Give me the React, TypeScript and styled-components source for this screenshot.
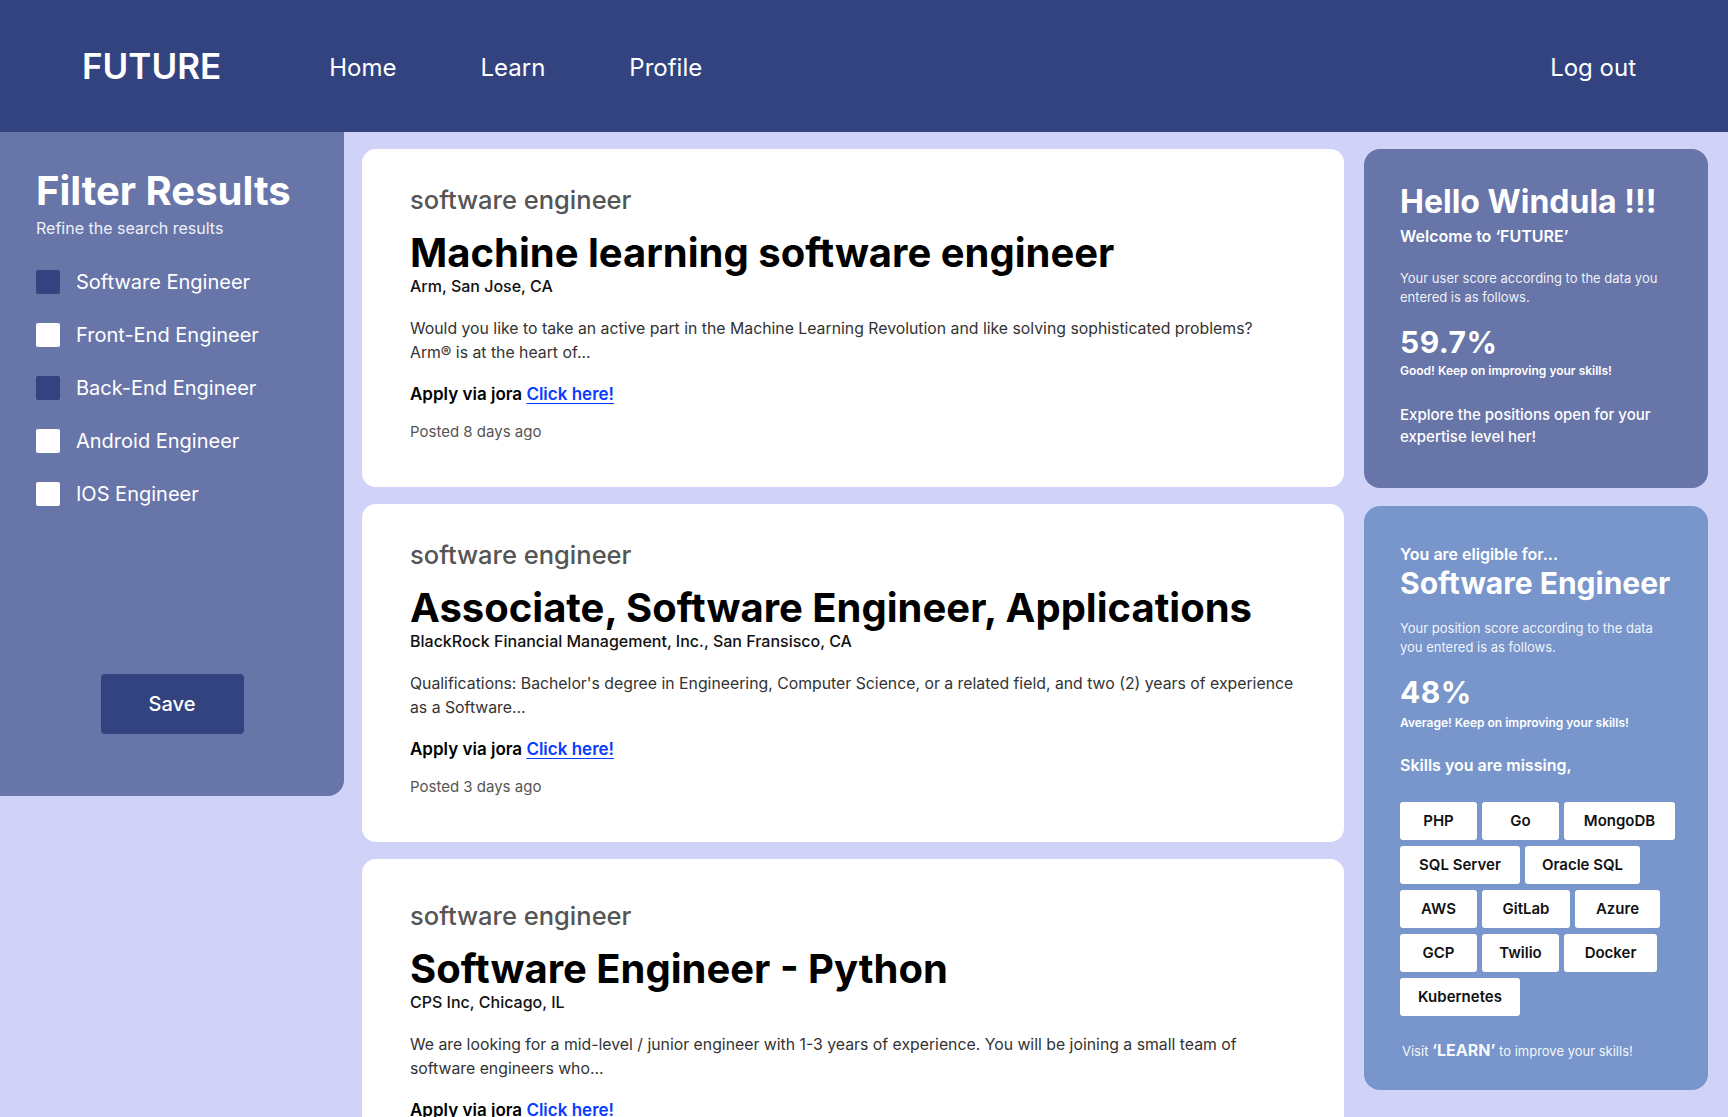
import React from "react";
import styled, { createGlobalStyle } from "styled-components";

const GlobalStyle = createGlobalStyle`
  * { box-sizing: border-box; }
  html, body { margin: 0; padding: 0; }
  body {
    font-family: Inter, "Noto Sans", "Liberation Sans", sans-serif;
    background: #d1d2f7;
    -webkit-font-smoothing: antialiased;
  }
`;

const Page = styled.div`
  min-height: 100vh;
  background: #d1d2f7;
`;

const Header = styled.header`
  height: 132px;
  background: #32437f;
  display: flex;
  align-items: center;
  padding: 0 92px 0 82px;
`;

const Logo = styled.div`
  font: 600 35px/44px Inter, sans-serif;
  color: #ffffff;
`;

const Nav = styled.nav`
  display: flex;
  gap: 84px;
  margin: 4px 0 0 108px;
`;

const NavLink = styled.a`
  font: 400 24px/30px Inter, sans-serif;
  color: #ffffff;
  text-decoration: none;
  cursor: pointer;
`;

const LogOut = styled(NavLink)`
  margin: 4px 0 0 auto;
`;

const Body = styled.div`
  display: flex;
  align-items: flex-start;
`;

const Sidebar = styled.aside`
  width: 344px;
  flex-shrink: 0;
  background: #6775a9;
  border-bottom-right-radius: 16px;
  padding: 35px 36px 62px;
  display: flex;
  flex-direction: column;
`;

const SideTitle = styled.h2`
  margin: 0;
  font: 700 40px/48px Inter, sans-serif;
  color: #ffffff;
`;

const SideSub = styled.p`
  margin: 3px 0 0;
  font: 400 16px/20px Inter, sans-serif;
  color: #eef0fa;
`;

const FilterList = styled.div`
  display: flex;
  flex-direction: column;
  gap: 29px;
  margin-top: 32px;
`;

const FilterRow = styled.label`
  display: flex;
  align-items: center;
  gap: 16px;
  height: 24px;
  font: 400 20px/24px Inter, sans-serif;
  color: #ffffff;
  cursor: pointer;
`;

const Box = styled.span<{ $checked: boolean }>`
  width: 24px;
  height: 24px;
  border-radius: 2px;
  flex-shrink: 0;
  background: ${(p) => (p.$checked ? "#32437f" : "#ffffff")};
`;

const SaveButton = styled.button`
  align-self: center;
  margin-top: 168px;
  width: 143px;
  height: 60px;
  border: none;
  border-radius: 4px;
  background: #32437f;
  color: #ffffff;
  font: 500 20px/24px Inter, sans-serif;
  cursor: pointer;
`;

const Main = styled.main`
  flex: 1;
  padding: 17px 20px 0 18px;
  display: flex;
  flex-direction: column;
  gap: 17px;
`;

const JobCard = styled.article<{ $padTop: number }>`
  background: #ffffff;
  border-radius: 14px;
  padding: ${(p) => p.$padTop}px 48px 45px;
`;

const Category = styled.div`
  font: 500 25.5px/30px Inter, sans-serif;
  color: #555555;
`;

const JobTitle = styled.h3`
  margin: 14px 0 0;
  font: 700 40px/48px Inter, sans-serif;
  color: #000000;
`;

const Company = styled.div`
  font: 500 16px/18px Inter, sans-serif;
  color: #111111;
`;

const Desc = styled.p`
  margin: 22px 0 0;
  font: 400 15.8px/24px Inter, sans-serif;
  color: #333333;
`;

const Apply = styled.div`
  margin-top: 19px;
  font: 600 17px/20px Inter, sans-serif;
  color: #000000;
`;

const ApplyLink = styled.a`
  color: #0a3cff;
  text-decoration: underline;
  text-underline-offset: 3px;
  cursor: pointer;
`;

const Posted = styled.div`
  margin-top: 18px;
  font: 400 15px/20px Inter, sans-serif;
  color: #555555;
`;

const RightCol = styled.aside`
  width: 344px;
  flex-shrink: 0;
  margin-right: 20px;
  padding-top: 17px;
  display: flex;
  flex-direction: column;
  gap: 18px;
`;

const InfoCard = styled.section`
  border-radius: 16px;
  color: #ffffff;
`;

const WelcomeCard = styled(InfoCard)`
  background: #6775a9;
  padding: 34px 36px 40px;
`;

const EligibleCard = styled(InfoCard)`
  background: #7896cb;
  padding: 38px 30px 30px 36px;
`;

const Greeting = styled.h2`
  margin: 0;
  font: 700 32px/38px Inter, sans-serif;
`;

const Welcome = styled.div`
  margin-top: 5px;
  font: 600 16px/20px Inter, sans-serif;
`;

const Note = styled.p<{ $mt: number }>`
  margin: ${(p) => p.$mt}px 0 0;
  font: 400 13px/19px Inter, sans-serif;
  color: rgba(255, 255, 255, 0.92);
`;

const Score = styled.div`
  margin-top: 17px;
  font: 700 30px/36px Inter, sans-serif;
  letter-spacing: 0.5px;
`;

const ScoreNote = styled.div<{ $mt: number }>`
  margin-top: ${(p) => p.$mt}px;
  font: 600 12px/14px Inter, sans-serif;
`;

const Explore = styled.p`
  margin: 26px 0 0;
  font: 500 15px/22px Inter, sans-serif;
`;

const Eligible = styled.div`
  font: 600 16px/20px Inter, sans-serif;
`;

const Position = styled.h2`
  margin: 2px 0 0;
  font: 700 30px/34px Inter, sans-serif;
`;

const SkillsHeading = styled.div`
  margin-top: 25px;
  font: 600 16px/20px Inter, sans-serif;
`;

const ChipGrid = styled.div`
  display: flex;
  flex-wrap: wrap;
  gap: 6px 5px;
  margin-top: 27px;
`;

const Chip = styled.span<{ $w: number }>`
  width: ${(p) => p.$w}px;
  height: 38px;
  display: flex;
  align-items: center;
  justify-content: center;
  background: #ffffff;
  border-radius: 3px;
  font: 600 15px/18px Inter, sans-serif;
  color: #111111;
`;

const Visit = styled.p`
  margin: 25px 0 0 2px;
  font: 400 13px/18px Inter, sans-serif;
  color: rgba(255, 255, 255, 0.95);

  strong {
    font-weight: 700;
    font-size: 16px;
  }
`;

const filters = [
  { label: "Software Engineer", checked: true },
  { label: "Front-End Engineer", checked: false },
  { label: "Back-End Engineer", checked: true },
  { label: "Android Engineer", checked: false },
  { label: "IOS Engineer", checked: false },
];

const jobs = [
  {
    title: "Machine learning software engineer",
    company: "Arm, San Jose, CA",
    desc: "Would you like to take an active part in the Machine Learning Revolution and like solving sophisticated problems? Arm® is at the heart of...",
    posted: "Posted 8 days ago",
    padTop: 36,
  },
  {
    title: "Associate, Software Engineer, Applications",
    company: "BlackRock Financial Management, Inc., San Fransisco, CA",
    desc: "Qualifications: Bachelor's degree in Engineering, Computer Science, or a related field, and two (2) years of experience as a Software...",
    posted: "Posted 3 days ago",
    padTop: 36,
  },
  {
    title: "Software Engineer - Python",
    company: "CPS Inc, Chicago, IL",
    desc: "We are looking for a mid-level / junior engineer with 1-3 years of experience. You will be joining a small team of software engineers who...",
    posted: "Posted 5 days ago",
    padTop: 42,
  },
];

const skills = [
  { name: "PHP", w: 77 },
  { name: "Go", w: 77 },
  { name: "MongoDB", w: 111 },
  { name: "SQL Server", w: 120 },
  { name: "Oracle SQL", w: 115 },
  { name: "AWS", w: 77 },
  { name: "GitLab", w: 88 },
  { name: "Azure", w: 85 },
  { name: "GCP", w: 77 },
  { name: "Twilio", w: 77 },
  { name: "Docker", w: 93 },
  { name: "Kubernetes", w: 120 },
];

export default function App() {
  return (
    <Page>
      <GlobalStyle />
      <Header>
        <Logo>FUTURE</Logo>
        <Nav>
          <NavLink>Home</NavLink>
          <NavLink>Learn</NavLink>
          <NavLink>Profile</NavLink>
        </Nav>
        <LogOut>Log out</LogOut>
      </Header>
      <Body>
        <Sidebar>
          <SideTitle>Filter Results</SideTitle>
          <SideSub>Refine the search results</SideSub>
          <FilterList>
            {filters.map((f) => (
              <FilterRow key={f.label}>
                <Box $checked={f.checked} />
                {f.label}
              </FilterRow>
            ))}
          </FilterList>
          <SaveButton>Save</SaveButton>
        </Sidebar>
        <Main>
          {jobs.map((j) => (
            <JobCard key={j.title} $padTop={j.padTop}>
              <Category>software engineer</Category>
              <JobTitle>{j.title}</JobTitle>
              <Company>{j.company}</Company>
              <Desc>{j.desc}</Desc>
              <Apply>
                Apply via jora <ApplyLink>Click here!</ApplyLink>
              </Apply>
              <Posted>{j.posted}</Posted>
            </JobCard>
          ))}
        </Main>
        <RightCol>
          <WelcomeCard>
            <Greeting>Hello Windula !!!</Greeting>
            <Welcome>Welcome to ‘FUTURE’</Welcome>
            <Note $mt={23}>
              Your user score according to the data you entered is as follows.
            </Note>
            <Score>59.7%</Score>
            <ScoreNote $mt={4}>Good! Keep on improving your skills!</ScoreNote>
            <Explore>Explore the positions open for your expertise level her!</Explore>
          </WelcomeCard>
          <EligibleCard>
            <Eligible>You are eligible for...</Eligible>
            <Position>Software Engineer</Position>
            <Note $mt={19}>
              Your position score according to the data you entered is as follows.
            </Note>
            <Score>48%</Score>
            <ScoreNote $mt={6}>Average! Keep on improving your skills!</ScoreNote>
            <SkillsHeading>Skills you are missing,</SkillsHeading>
            <ChipGrid>
              {skills.map((s) => (
                <Chip key={s.name} $w={s.w}>
                  {s.name}
                </Chip>
              ))}
            </ChipGrid>
            <Visit>
              Visit <strong>‘LEARN’</strong> to improve your skills!
            </Visit>
          </EligibleCard>
        </RightCol>
      </Body>
    </Page>
  );
}
